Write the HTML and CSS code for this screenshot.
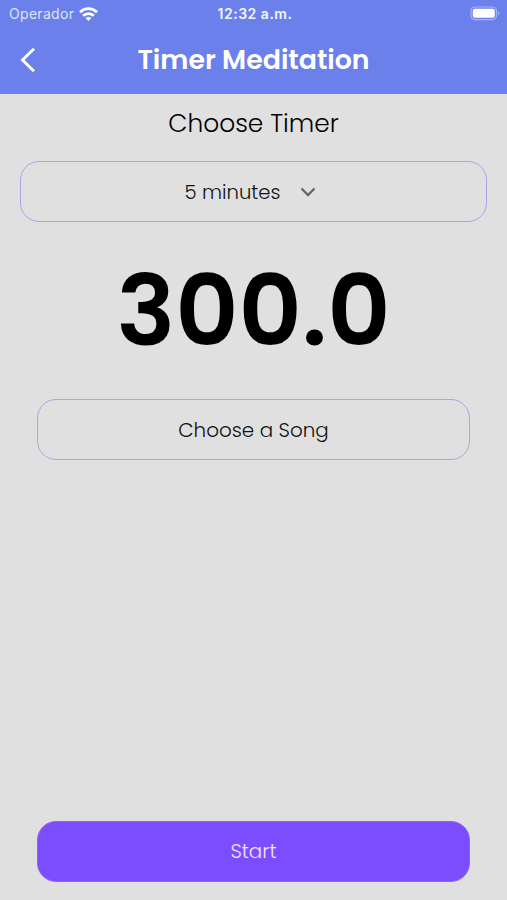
FILE: index.html
```html
<!DOCTYPE html>
<html lang="en">
<head>
  <meta charset="UTF-8">
  <meta name="viewport" content="width=device-width, initial-scale=1.0">
  <title>Timer Meditation</title>
  <link rel="stylesheet" href="styles.css">
</head>
<body>

<div class="screen">
  <header class="header">
    <!-- Status bar -->
    <div class="status-bar">
      <div class="carrier">
        <span class="carrier-name">Operador</span>
        <svg class="wifi" width="19" height="14" viewBox="0 0 19 14" fill="none" stroke="#fff" stroke-width="2.8">
          <path d="M1 5.2C5.8 .5 13.2 .5 18 5.2"/>
          <path d="M4.1 8.7C7.2 5.8 11.8 5.8 14.9 8.7"/>
          <path d="M9.5 14L6.6 11.1C8.3 9.7 10.7 9.7 12.4 11.1Z" fill="#fff" stroke="none"/>
        </svg>
      </div>
      <span class="clock">12:32 a.m.</span>
      <svg class="battery" width="31" height="15" viewBox="0 0 31 15">
        <rect x="1" y="1" width="25.5" height="12.6" rx="4" fill="none" stroke="#a9b4f4" stroke-width="1.2"/>
        <rect x="2.8" y="2.8" width="22" height="9" rx="2" fill="#fff"/>
        <path d="M28 5Q30.5 7.3 28 9.6Z" fill="#a9b4f4"/>
      </svg>
    </div>
    <!-- Title bar -->
    <div class="title-bar">
      <svg class="back" width="16" height="26" viewBox="0 0 16 26" fill="none" stroke="#fff" stroke-width="2.9">
        <path d="M14 1.8L2.5 13L14 24.2"/>
      </svg>
      <h1 class="title">Timer Meditation</h1>
    </div>
  </header>

  <main class="content">
    <h2 class="subtitle">Choose Timer</h2>
    <button class="button select">
      <span class="minutes">5 minutes</span>
      <svg width="16" height="10" viewBox="0 0 16 10" fill="none" stroke="#666" stroke-width="2.4">
        <path d="M1.5 1.5L8 8L14.5 1.5"/>
      </svg>
    </button>
    <div class="countdown">300.0</div>
    <button class="button song"><span>Choose a Song</span></button>
    <button class="button start"><span>Start</span></button>
  </main>
</div>

</body>
</html>
```
FILE: styles.css
```css
* {
  box-sizing: border-box;
}
body {
  margin: 0;
  background-color: #e0e0e0;
  font-family: Poppins, Inter, sans-serif;
}
svg {
  display: block;
}
.screen {
  height: 900px;
  display: flex;
  flex-direction: column;
}
.header {
  height: 94px;
  background-color: #6c80eb;
  color: white;
}
.status-bar {
  height: 27px;
  padding: 0 6px 0 9px;
  display: grid;
  grid-template-columns: 1fr auto 1fr;
  align-items: center;
  font-family: Inter, sans-serif;
}
.carrier {
  display: flex;
  align-items: center;
  gap: 5px;
}
.carrier-name {
  font-size: 14px;
  color: #dfe4fd;
  letter-spacing: 0.3px;
}
.clock {
  font-size: 14px;
  font-weight: 600;
  color: #f2f4ff;
  letter-spacing: 0.5px;
}
.battery {
  justify-self: end;
}
.title-bar {
  height: 65px;
  padding: 0 20px;
  display: grid;
  grid-template-columns: 16px 1fr 16px;
  align-items: center;
}
.title {
  margin: 0;
  font-size: 26.8px;
  font-weight: 600;
  text-align: center;
}
.content {
  flex: 1;
  display: flex;
  flex-direction: column;
  padding: 15px 37px 18px;
}
.subtitle {
  margin: 0;
  height: 30px;
  line-height: 30px;
  font-size: 24.9px;
  font-weight: 300;
  text-align: center;
}
.button {
  height: 61px;
  border: 1.5px solid #b0a2e6;
  border-radius: 19px;
  background: none;
  display: flex;
  justify-content: center;
  align-items: center;
  font: inherit;
  font-size: 19.9px;
  font-weight: 300;
  color: #111;
  cursor: pointer;
}
.select {
  margin: 22px -17px 0;
  gap: 20px;
  padding: 0 6px 0 0;
  font-size: 19.6px;
}
.countdown {
  height: 120px;
  margin: 29px 0 28px;
  line-height: 120px;
  font-size: 98px;
  font-weight: 600;
  text-align: center;
  color: #000;
}
.start {
  margin-top: auto;
  padding-bottom: 3px;
  border-color: #8c64fb;
  background-color: #7c4dff;
  color: #f0e4ff;
}
```
